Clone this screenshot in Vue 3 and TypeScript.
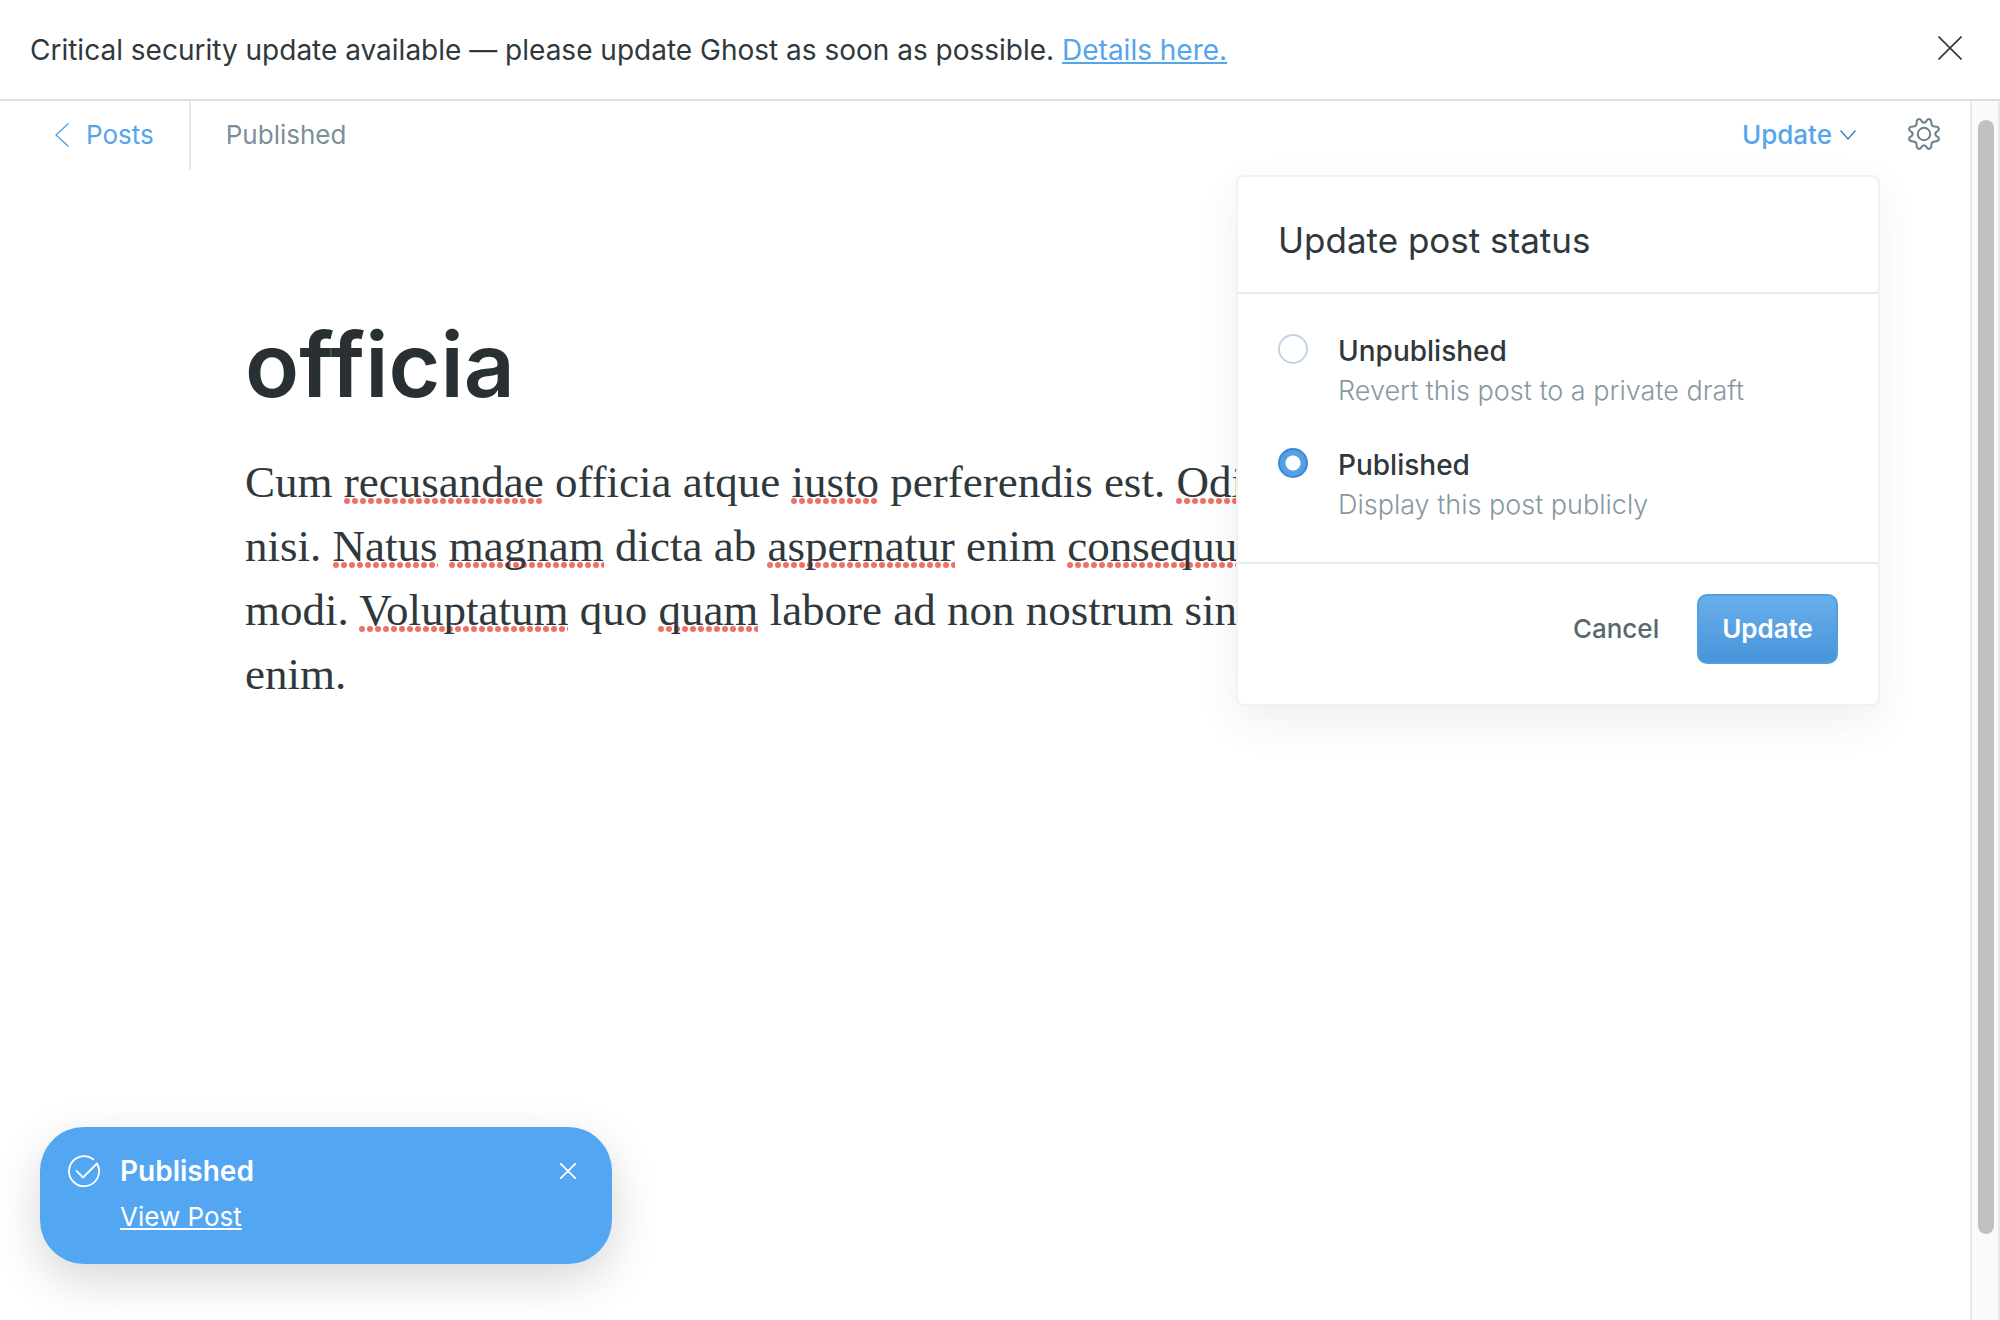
<script setup lang="ts">
import { ref } from 'vue'

interface Piece {
  text: string
  flagged?: boolean
}

interface StatusOption {
  value: string
  label: string
  hint: string
}

const status = ref('published')

const options: StatusOption[] = [
  { value: 'unpublished', label: 'Unpublished', hint: 'Revert this post to a private draft' },
  { value: 'published', label: 'Published', hint: 'Display this post publicly' },
]

const lines: Piece[][] = [
  [
    { text: 'Cum ' },
    { text: 'recusandae', flagged: true },
    { text: ' officia atque ' },
    { text: 'iusto', flagged: true },
    { text: ' perferendis est. ' },
    { text: 'Odit', flagged: true },
  ],
  [
    { text: 'nisi. ' },
    { text: 'Natus', flagged: true },
    { text: ' ' },
    { text: 'magnam', flagged: true },
    { text: ' dicta ab ' },
    { text: 'aspernatur', flagged: true },
    { text: ' enim ' },
    { text: 'consequuntur', flagged: true },
  ],
  [
    { text: 'modi. ' },
    { text: 'Voluptatum', flagged: true },
    { text: ' quo ' },
    { text: 'quam', flagged: true },
    { text: ' labore ad non nostrum sint' },
  ],
  [{ text: 'enim.' }],
]
</script>

<template>
  <div class="app">
    <div class="banner" role="alert">
      <p class="banner-text">
        Critical security update available — please update Ghost as soon as possible.
        <a href="#details">Details here.</a>
      </p>
      <button class="icon-button banner-close" type="button" aria-label="Dismiss">
        <svg width="24" height="24" viewBox="0 0 24 24" fill="none" stroke="currentColor" stroke-width="1.6">
          <path d="M0.5 0.5l23 23M23.5 0.5l-23 23" />
        </svg>
      </button>
    </div>

    <div class="body">
      <main class="main">
        <header class="toolbar">
          <a class="back" href="#posts">
            <svg width="14" height="24" viewBox="0 0 14 24" fill="none" stroke="currentColor" stroke-width="1.5">
              <path d="M13.5 0.5L1 12l12.500 11.500" />
            </svg>
            Posts
          </a>
          <span class="state">Published</span>
          <div class="actions">
            <div class="publish">
              <button class="trigger" type="button" aria-expanded="true">
                Update
                <svg width="16" height="10" viewBox="0 0 16 10" fill="none" stroke="#3f7fb5" stroke-width="1.4">
                  <path d="M0.500 0.500L8 9l7.500-8.500" />
                </svg>
              </button>
              <form class="menu" @submit.prevent>
                <h2 class="menu-title">Update post status</h2>
                <div class="menu-options">
                  <label v-for="option in options" :key="option.value" class="option">
                    <input v-model="status" class="radio" type="radio" name="status" :value="option.value" />
                    <span class="option-text">
                      <span class="option-label">{{ option.label }}</span>
                      <span class="option-hint">{{ option.hint }}</span>
                    </span>
                  </label>
                </div>
                <div class="menu-footer">
                  <button class="cancel" type="button">Cancel</button>
                  <button class="submit" type="submit">Update</button>
                </div>
              </form>
            </div>
            <button class="icon-button gear" type="button" aria-label="Settings">
              <svg width="32" height="32" viewBox="0 0 32 32" fill="none" stroke="currentColor" stroke-width="2" stroke-linejoin="round">
                <circle cx="16" cy="16" r="6.200" />
                <path d="M8.600 6.500C8.600 3 8.600 1.800 10.600 1.200C12.600 0.600 12.900 2.200 13.900 3.500C15.200 5.100 16.800 5.100 18.100 3.500C19.100 2.200 19.400 0.600 21.400 1.200C23.400 1.800 23.400 3 23.400 5C23.400 7.500 24.500 8.600 27 8.600C29 8.600 30.200 8.600 30.800 10.600C31.400 12.600 29.800 12.900 28.500 13.900C26.900 15.200 26.900 16.800 28.500 18.100C29.800 19.100 31.400 19.400 30.800 21.400C30.200 23.400 29 23.400 27 23.400C24.500 23.400 23.400 24.500 23.400 27C23.400 29 23.400 30.200 21.400 30.800C19.400 31.400 19.100 29.800 18.100 28.500C16.800 26.900 15.200 26.900 13.900 28.500C12.900 29.800 12.600 31.400 10.600 30.800C8.600 30.200 8.600 29 8.600 27C8.600 24.500 7.500 23.400 5 23.400C3 23.400 1.800 23.400 1.200 21.400C0.600 19.400 2.200 19.100 3.500 18.100C5.100 16.800 5.100 15.200 3.500 13.900C2.200 12.900 0.600 12.600 1.200 10.600C1.800 8.600 3 8.600 5 8.600C7.500 8.600 8.600 7.500 8.600 5Z" />
              </svg>
            </button>
          </div>
        </header>

        <article class="editor">
          <h1 class="title">officia</h1>
          <p class="content">
            <span v-for="(line, i) in lines" :key="i" class="line"><span v-for="(piece, j) in line" :key="j" :class="{ flagged: piece.flagged }">{{ piece.text }}</span></span>
          </p>
        </article>
      </main>

      <div class="scrollbar" aria-hidden="true">
        <div class="thumb"></div>
      </div>
    </div>

    <aside class="toast" role="status">
      <svg class="toast-icon" width="32" height="32" viewBox="0 0 32 32" fill="none" stroke="currentColor" stroke-width="1.800" stroke-linecap="round" stroke-linejoin="round">
        <path d="M25.300 4.400A15 15 0 1 0 29.200 9" />
        <path d="M8.500 15.800L15 22.500L29 8.500" />
      </svg>
      <div class="toast-text">
        <strong class="toast-title">Published</strong>
        <a class="toast-link" href="#view">View Post</a>
      </div>
      <button class="icon-button toast-close" type="button" aria-label="Close">
        <svg width="16" height="16" viewBox="0 0 16 16" fill="none" stroke="currentColor" stroke-width="1.800" stroke-linecap="round">
          <path d="M0.800 0.800l14.400 14.400M15.200 0.800l-14.400 14.400" />
        </svg>
      </button>
    </aside>
  </div>
</template>

<style>
body {
  margin: 0;
  background: #fff;
}
</style>

<style scoped>
* {
  box-sizing: border-box;
}

.app {
  position: relative;
  display: flex;
  flex-direction: column;
  min-height: 100vh;
  overflow: hidden;
  font-family: Inter, "Liberation Sans", sans-serif;
  font-size: 26px;
  line-height: 36px;
  color: #2f383c;
}

button {
  margin: 0;
  padding: 0;
  border: 0;
  background: none;
  font: inherit;
  color: inherit;
  cursor: pointer;
}

svg {
  display: block;
}

.banner {
  display: flex;
  align-items: center;
  justify-content: space-between;
  padding: 32px 38px 31px 30px;
  border-bottom: 2px solid #dcdfde;
  font-size: 28px;
}

.banner-text {
  margin: 0;
}

.banner-close {
  padding-bottom: 4px;
}

.banner a {
  color: #55a5ea;
  text-decoration-thickness: 2px;
  text-underline-offset: 2px;
  text-decoration-skip-ink: none;
}

.body {
  display: flex;
  flex: 1;
}

.main {
  flex: 1;
  min-width: 0;
}

.toolbar {
  display: flex;
  align-items: center;
  height: 70px;
  padding: 0 30px 2px 0;
}

.back {
  display: flex;
  align-items: center;
  gap: 17px;
  height: 70px;
  padding: 0 35px 0 55px;
  border-right: 2px solid #e3eaf0;
  color: #55a5ea;
  text-decoration: none;
}

.state {
  padding-left: 35px;
  color: #7c8f9a;
}

.actions {
  display: flex;
  align-items: center;
  gap: 52px;
  margin-left: auto;
}

.publish {
  position: relative;
}

.trigger {
  display: flex;
  align-items: center;
  gap: 8px;
  font-weight: 500;
  color: #55a5ea;
}

.gear {
  padding-bottom: 2px;
  color: #6b808b;
}

.menu {
  position: absolute;
  z-index: 2;
  top: 58px;
  right: -24px;
  width: 644px;
  border: 2px solid #f0f2f2;
  border-radius: 8px;
  background: #fff;
  box-shadow: 0 16px 40px rgba(40, 60, 60, 0.08);
}

.menu-title {
  margin: 0;
  padding: 39px 40px 28px;
  border-bottom: 2px solid #e3ecf3;
  font-size: 35px;
  font-weight: 400;
  line-height: 48px;
}

.menu-options {
  display: flex;
  flex-direction: column;
  gap: 38px;
  padding: 39px 40px;
  border-bottom: 2px solid #e3ecf3;
}

.option {
  display: flex;
  align-items: flex-start;
  gap: 30px;
}

.radio {
  appearance: none;
  width: 30px;
  height: 30px;
  margin: 1px 0 0;
  border: 2px solid #bcd5e8;
  border-radius: 50%;
  background: #fff;
}

.radio:checked {
  border-color: #3d88d3;
  background: radial-gradient(circle, #fff 0 7px, #559fe3 8px);
}

.option-text {
  display: flex;
  flex-direction: column;
  gap: 4px;
}

.option-label {
  font-size: 28px;
  font-weight: 500;
}

.option-hint {
  font-size: 27px;
  font-weight: 300;
  color: #87989f;
}

.menu-footer {
  display: flex;
  align-items: center;
  justify-content: flex-end;
  gap: 38px;
  padding: 30px 40px;
  padding-bottom: 40px;
}

.cancel {
  font-weight: 500;
  color: #57686f;
}

.submit {
  height: 70px;
  padding: 0 23px;
  border: 2px solid #529fe2;
  border-radius: 10px;
  background: linear-gradient(#69aeea, #4795da);
  font-weight: 600;
  color: #fff;
}

.editor {
  max-width: 1480px;
  margin: 0 auto;
  padding-top: 136px;
}

.title {
  margin: 0;
  font-size: 89px;
  font-weight: 600;
  line-height: 116px;
  color: #283033;
}

.content {
  margin: 27px 0 0;
  font-family: "Liberation Serif", serif;
  font-size: 45px;
  line-height: 64px;
}

.line {
  display: block;
  white-space: pre;
}

.flagged {
  background: url("data:image/svg+xml,%3Csvg xmlns='http://www.w3.org/2000/svg' width='8' height='6'%3E%3Ccircle cx='3' cy='3' r='3' fill='%23ef7067'/%3E%3C/svg%3E") left bottom 3px / 8px 6px repeat-x;
}

.scrollbar {
  display: flex;
  flex-direction: column;
  width: 30px;
  padding: 19px 4px 86px 6px;
  border: solid #e8e8e8;
  border-width: 0 2px;
  background: #fafafa;
}

.thumb {
  flex: 1;
  border-radius: 8px;
  background: #c1c1c1;
}

.toast {
  position: absolute;
  bottom: 56px;
  left: 40px;
  display: flex;
  align-items: flex-start;
  width: 572px;
  padding: 26px 36px 29px 28px;
  border-radius: 44px;
  background: #52a6f2;
  box-shadow: 0 16px 48px rgba(0, 0, 0, 0.16);
  color: #fff;
}

.toast-icon {
  margin: 2px 20px 0 0;
}

.toast-text {
  display: flex;
  flex: 1;
  flex-direction: column;
  align-items: flex-start;
  gap: 10px;
}

.toast-title {
  font-size: 28px;
  font-weight: 600;
}

.toast-link {
  color: #fff;
  text-decoration-thickness: 2px;
  text-underline-offset: 2px;
}

.toast-close {
  margin-top: 10px;
}
</style>
